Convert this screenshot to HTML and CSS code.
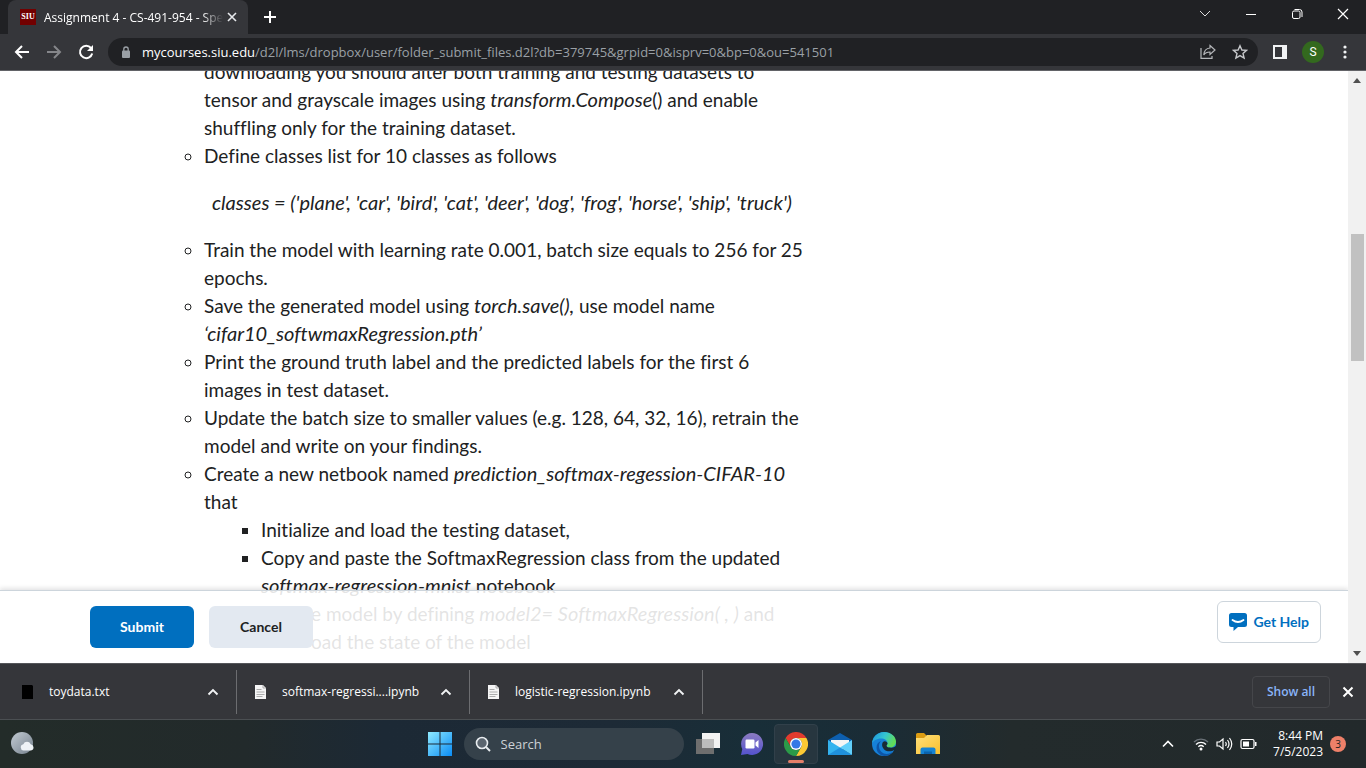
FILE: index.html
```html
<!DOCTYPE html>
<html lang="en">
<head>
<meta charset="utf-8">
<title>Assignment 4 - CS-491-954</title>
<link rel="stylesheet" href="styles.css">
</head>
<body>
<div class="screen">
  <header class="tabstrip">
    <div class="tab">
      <span class="favicon">SIU</span>
      <span class="tab-title">Assignment 4 - CS-491-954 - Spe</span>
      <button class="icon-btn" aria-label="Close tab"><svg width="10" height="10" viewBox="0 0 10 10"><path d="M1 1l8 8M9 1L1 9" stroke="#e8eaed" stroke-width="1.6"/></svg></button>
    </div>
    <button class="icon-btn new-tab" aria-label="New tab"><svg width="14" height="14" viewBox="0 0 14 14"><path d="M7 1v12M1 7h12" stroke="#fff" stroke-width="2"/></svg></button>
    <div class="window-controls">
      <button class="icon-btn" aria-label="Search tabs"><svg width="12" height="12" viewBox="0 0 12 12"><path d="M1 3l5 5 5-5" fill="none" stroke="#ddd"/></svg></button>
      <button class="icon-btn" aria-label="Minimize"><svg width="12" height="12" viewBox="0 0 12 12"><path d="M1 6.500h10" stroke="#fff"/></svg></button>
      <button class="icon-btn" aria-label="Restore"><svg width="12" height="12" viewBox="0 0 12 12" fill="none" stroke="#fff"><rect x="1.500" y="3" width="7.500" height="7.500" rx="1.500"/><path d="M3.500 1.500h5a2.500 2.500 0 0 1 2.500 2.500v5"/></svg></button>
      <button class="icon-btn" aria-label="Close"><svg width="12" height="12" viewBox="0 0 12 12"><path d="M1 1l10 10M11 1L1 11" stroke="#fff" stroke-width="1.200"/></svg></button>
    </div>
  </header>

  <nav class="toolbar" aria-label="Browser toolbar">
    <button class="icon-btn" aria-label="Back"><svg width="16" height="16" viewBox="0 0 16 16" fill="none" stroke="#fff" stroke-width="2"><path d="M15 8H2M8 2L2 8l6 6"/></svg></button>
    <button class="icon-btn" aria-label="Forward"><svg width="16" height="16" viewBox="0 0 16 16" fill="none" stroke="#85868a" stroke-width="2"><path d="M1 8h13M8 2l6 6-6 6"/></svg></button>
    <button class="icon-btn" aria-label="Reload"><svg width="16" height="16" viewBox="0 0 16 16"><path d="M13 4A6.200 6.200 0 1 0 14.200 9.500" fill="none" stroke="#fff" stroke-width="2"/><path d="M15 1v6H9z" fill="#fff"/></svg></button>
    <div class="omnibox">
      <svg width="10" height="13" viewBox="0 0 10 13"><rect x="1" y="4.500" width="8" height="7.500" rx="1" fill="#9aa0a6"/><path d="M2.800 5V3.200a2.200 2.200 0 0 1 4.400 0V5" fill="none" stroke="#9aa0a6" stroke-width="1.300"/></svg>
      <a class="url" href="#"><b>mycourses.siu.edu</b>/d2l/lms/dropbox/user/folder_submit_files.d2l?db=379745&amp;grpid=0&amp;isprv=0&amp;bp=0&amp;ou=541501</a>
      <button class="icon-btn" aria-label="Share"><svg width="16" height="16" viewBox="0 0 16 16" fill="none" stroke="#b5b7ba" stroke-width="1.200"><path d="M1 4v10.400h11V12"/><path d="M10 1.500L15 6l-5 4.500V8C7 8 5 9 3.800 11 4 7.500 6 4.300 10 4z"/></svg></button>
      <button class="icon-btn" aria-label="Bookmark"><svg width="16" height="16" viewBox="0 0 16 16"><path d="M8 1.800l1.900 4.200 4.600.4-3.500 3 1.100 4.600L8 11.600 3.900 14 5 9.400l-3.500-3L6.100 6z" fill="none" stroke="#c6c8cb" stroke-width="1.400"/></svg></button>
    </div>
    <button class="icon-btn side" aria-label="Side panel"><svg width="14" height="14" viewBox="0 0 14 14"><rect x="1" y="1" width="12" height="12" fill="none" stroke="#f1f3f4" stroke-width="2"/><path d="M9 1h4v12H9z" fill="#f1f3f4"/></svg></button>
    <button class="avatar" aria-label="Profile">S</button>
    <button class="icon-btn menu" aria-label="Menu"><svg width="4" height="14" viewBox="0 0 4 14" fill="#f1f3f4"><circle cx="2" cy="2" r="1.600"/><circle cx="2" cy="7" r="1.600"/><circle cx="2" cy="12" r="1.600"/></svg></button>
  </nav>

  <main class="viewport">
    <div class="page">
      <article class="content">
        <ul class="steps">
          <li class="continued">downloading you should alter both training and testing datasets to<br>tensor and grayscale images using <i>transform.Compose</i>() and enable<br>shuffling only for the training dataset.</li>
          <li>Define classes list for 10 classes as follows
            <p class="code"><i>classes = ('plane', 'car', 'bird', 'cat', 'deer', 'dog', 'frog', 'horse', 'ship', 'truck')</i></p></li>
          <li>Train the model with learning rate 0.001, batch size equals to 256 for 25<br>epochs.</li>
          <li>Save the generated model using <i>torch.save(),</i> use model name<br><i>‘cifar10_softwmaxRegression.pth’</i></li>
          <li>Print the ground truth label and the predicted labels for the first 6<br>images in test dataset.</li>
          <li>Update the batch size to smaller values (e.g. 128, 64, 32, 16), retrain the<br>model and write on your findings.</li>
          <li>Create a new netbook named <i>prediction_softmax-regession-CIFAR-10</i><br>that
            <ul class="substeps">
              <li>Initialize and load the testing dataset,</li>
              <li>Copy and paste the SoftmaxRegression class from the updated<br><i>softmax-regression-mnist</i> notebook</li>
              <li class="covered">e model by defining <i>model2= SoftmaxRegression( , )</i> and<br>oad the state of the model</li>
            </ul></li>
        </ul>
      </article>
      <footer class="actions">
        <button class="btn primary">Submit</button>
        <button class="btn">Cancel</button>
        <button class="help"><svg width="18" height="18" viewBox="0 0 18 18"><path d="M2.500 0h13A2.500 2.500 0 0 1 18 2.500v9a2.500 2.500 0 0 1-2.500 2.500H9l-4.500 4v-4h-2A2.500 2.500 0 0 1 0 11.500v-9A2.500 2.500 0 0 1 2.500 0z" fill="#006fbf"/><path d="M3.500 7q5.500 4 11 0" fill="none" stroke="#fff" stroke-width="1.800" stroke-linecap="round"/></svg>Get Help</button>
      </footer>
    </div>
    <div class="scrollbar" aria-hidden="true">
      <svg width="8" height="5" viewBox="0 0 8 5"><path d="M0 5l4-5 4 5z" fill="#505050"/></svg>
      <span class="track"><span class="thumb"></span></span>
      <svg width="8" height="5" viewBox="0 0 8 5"><path d="M0 0l4 5 4-5z" fill="#505050"/></svg>
    </div>
  </main>

  <section class="downloads" aria-label="Downloads">
    <div class="download"><svg width="12" height="14" viewBox="0 0 12 14"><path d="M1 0h10l1 1v13H1z" fill="#000"/></svg><a href="#">toydata.txt</a><button class="icon-btn" aria-label="Options"><svg width="12" height="8" viewBox="0 0 12 8"><path d="M1.500 6.500L6 2l4.500 4.500" fill="none" stroke="#f1f3f4" stroke-width="1.900"/></svg></button></div>
    <div class="download"><svg width="12" height="14" viewBox="0 0 12 14"><path d="M1 0h8l3 3v11H1z" fill="#f5f5f5"/><path d="M9 0v3h3M2.500 4.500h5M2.500 7h8M2.500 9.500h8M2.500 11.500h6" stroke="#999" fill="none" stroke-width=".8"/></svg><a href="#">softmax-regressi....ipynb</a><button class="icon-btn" aria-label="Options"><svg width="12" height="8" viewBox="0 0 12 8"><path d="M1.500 6.500L6 2l4.500 4.500" fill="none" stroke="#f1f3f4" stroke-width="1.900"/></svg></button></div>
    <div class="download"><svg width="12" height="14" viewBox="0 0 12 14"><path d="M1 0h8l3 3v11H1z" fill="#f5f5f5"/><path d="M9 0v3h3M2.500 4.500h5M2.500 7h8M2.500 9.500h8M2.500 11.500h6" stroke="#999" fill="none" stroke-width=".8"/></svg><a href="#">logistic-regression.ipynb</a><button class="icon-btn" aria-label="Options"><svg width="12" height="8" viewBox="0 0 12 8"><path d="M1.500 6.500L6 2l4.500 4.500" fill="none" stroke="#f1f3f4" stroke-width="1.900"/></svg></button></div>
    <button class="show-all">Show all</button>
    <button class="icon-btn" aria-label="Close downloads"><svg width="12" height="12" viewBox="0 0 12 12"><path d="M1.500 1.500l9 9M10.500 1.500l-9 9" stroke="#fff" stroke-width="2"/></svg></button>
  </section>

  <footer class="taskbar">
    <div class="weather"><svg width="24" height="24" viewBox="0 0 24 24"><defs><linearGradient id="moon" x2="1" y2="1"><stop stop-color="#c3cbd3"/><stop offset="1" stop-color="#75818d"/></linearGradient></defs><circle cx="11" cy="11" r="11" fill="url(#moon)"/><path d="M12.500 18.500a3.200 3.200 0 0 1-.2-6.300 4 4 0 0 1 7.400 0 3.200 3.200 0 0 1 .3 6.300z" fill="#eef2f6"/></svg></div>
    <div class="apps">
      <button class="app start" aria-label="Start"><svg width="24" height="24" viewBox="0 0 24 24"><defs><linearGradient id="win" x2="1" y2="1" gradientUnits="userSpaceOnUse" x1="0" y1="0" gradientTransform="scale(24)"><stop stop-color="#8feaff"/><stop offset="1" stop-color="#0a8cf5"/></linearGradient></defs><path d="M0 0h11.500v11.500H0zM12.500 0H24v11.500H12.500zM0 12.500h11.500V24H0zM12.500 12.500H24V24H12.500z" fill="url(#win)"/></svg></button>
      <label class="search"><svg width="16" height="16" viewBox="0 0 16 16"><circle cx="7" cy="7" r="5.500" fill="#5b656f" stroke="#e9edf0" stroke-width="1.600"/><path d="M11 11l4 4" stroke="#e9edf0" stroke-width="2"/></svg><input type="text" placeholder="Search" aria-label="Search"></label>
      <button class="app" aria-label="Task view"><svg width="24" height="24" viewBox="0 0 24 24"><path d="M0 7h18v15H0z" fill="#6e6e6e"/><path d="M6 1h18v15H6z" fill="#f2f2f2"/><path d="M6 7h12v9H6z" fill="#bdbdbd"/></svg></button>
      <button class="app" aria-label="Chat"><svg width="24" height="24" viewBox="0 0 24 24"><defs><linearGradient id="chat" x2="0" y2="1"><stop stop-color="#8b7bc0"/><stop offset="1" stop-color="#5453cf"/></linearGradient></defs><path d="M12 1a11 11 0 1 1-4.500 21L1 23l1.300-6A11 11 0 0 1 12 1z" fill="url(#chat)"/><rect x="5.500" y="7.500" width="9" height="9" rx="1.200" fill="#fff"/><path d="M15.500 10.500l3-2.500v8l-3-2.500z" fill="#fff"/></svg></button>
      <button class="app active" aria-label="Chrome"><svg width="24" height="24" viewBox="0 0 24 24"><path d="M1.600 6A12 12 0 0 1 22.400 6H12a6 6 0 0 0-5.200 9z" fill="#e33b2e"/><path d="M22.400 6A12 12 0 0 1 12 24l5.200-9A6 6 0 0 0 12 6z" fill="#fcc934"/><path d="M12 24A12 12 0 0 1 1.600 6l5.200 9a6 6 0 0 0 10.400 0z" fill="#2b9a48"/><circle cx="12" cy="12" r="6" fill="#fff"/><circle cx="12" cy="12" r="4.600" fill="#3478e5"/></svg></button>
      <button class="app" aria-label="Mail"><svg width="24" height="24" viewBox="0 0 24 24"><path d="M0 8l12-7 12 7v4H0z" fill="#0d5fae"/><path d="M3 8h18v6l-9 4-9-4z" fill="#f5f5f5"/><path d="M0 8l24 15H0z" fill="#34b3ee"/><path d="M24 8v15L12 15.500z" fill="#62d0fb"/><path d="M0 23l12-7.500L24 23z" fill="#1f91dc"/></svg></button>
      <button class="app" aria-label="Edge"><svg width="24" height="24" viewBox="0 0 24 24"><defs><linearGradient id="edge-top" x2="1" y2=".4"><stop stop-color="#1a8fe0"/><stop offset=".55" stop-color="#35c5cf"/><stop offset="1" stop-color="#61dc5a"/></linearGradient></defs><circle cx="12" cy="12" r="12" fill="#1681d8"/><path d="M0 11.500C.5 5 5.500 0 12 0c7 0 12 4.500 12 9.500 0 4-3 6-6 6-2.500 0-3.500-1-3.500-1.800 0-.7 1-1 1-2.700 0-2.500-2.700-4.500-6.500-4.500-4.500 0-8 2.500-9 5z" fill="url(#edge-top)"/><path d="M9 9c-3 3-2.500 8 .5 11 3 2.800 8 2.500 11.500-.5C19 22.500 15.500 24 12 24 7.500 23 4.500 20 4.500 15.500 4.500 12 6.500 10 9 9z" fill="#0d55a8"/><path d="M11 10c-2 2.500-.5 7 3 8.700 3 1.300 6.500.5 8.500-.7l-1.500 2.500 3-1V14c-2 1.500-4 2-6 1.500-2.500 0-3.500-1-3.500-1.800 0-.7 1-1 1-2.200 0-1.200-2.500-3.500-4.500-1.500z" fill="#192b36"/></svg></button>
      <button class="app" aria-label="File Explorer"><svg width="24" height="24" viewBox="0 0 24 24"><defs><linearGradient id="folder" x2="1" y2="1"><stop stop-color="#ffe07b"/><stop offset="1" stop-color="#f9bf2c"/></linearGradient></defs><path d="M0 2.500A1.500 1.500 0 0 1 1.500 1H8l2.500 2.500V9H0z" fill="#dc9c12"/><path d="M0 6h8l3-3h11.500A1.500 1.500 0 0 1 24 4.500V22H0z" fill="url(#folder)"/><path d="M4.500 22v-4.500A2 2 0 0 1 6.500 15.500h11a2 2 0 0 1 2 2V22z" fill="#1583d3"/><path d="M8 22v-2.500h8V22z" fill="#0b63ad"/></svg></button>
    </div>
    <div class="tray">
      <button class="icon-btn" aria-label="Hidden icons"><svg width="12" height="8" viewBox="0 0 12 8"><path d="M1 6.500l5-5 5 5" fill="none" stroke="#fff" stroke-width="1.600"/></svg></button>
      <span class="status">
        <svg width="16" height="14" viewBox="0 0 16 14" fill="none" stroke-width="1.400"><path d="M1 5a10 10 0 0 1 14 0" stroke="#6b7278"/><path d="M3 7.500a7 7 0 0 1 10 0M5.300 9.800a4 4 0 0 1 5.400 0" stroke="#fff"/><circle cx="8" cy="12" r="1.500" fill="#fff"/></svg>
        <svg width="17" height="14" viewBox="0 0 17 14" fill="none" stroke="#fff" stroke-width="1.200"><path d="M1 5h2.500L7 2v10L3.500 9H1zM9.500 5q1.500 2 0 4M11.500 3q3 4 0 8M13.500 1q4.500 6 0 12"/></svg>
        <svg width="17" height="12" viewBox="0 0 17 12"><rect x="1" y="1.500" width="13" height="9" rx="1.500" fill="none" stroke="#fff" stroke-width="1.200"/><path d="M3 3.500h6v5H3zM15 4h1.500v4H15z" fill="#fff"/></svg>
      </span>
      <time class="clock">8:44 PM<br>7/5/2023</time>
      <span class="badge">3</span>
    </div>
  </footer>
</div>
</body>
</html>
```

FILE: styles.css
```css
* { box-sizing: border-box; }
body { margin: 0; font-family: "Open Sans", "Noto Sans", sans-serif; }
button { font: inherit; border: 0; padding: 0; background: none; cursor: pointer; }
svg { display: block; flex: none; }
a { color: inherit; text-decoration: none; }
.screen { height: 100vh; display: flex; flex-direction: column; overflow: hidden; }
.icon-btn { display: flex; align-items: center; justify-content: center; flex: none; }

.tabstrip { flex: none; height: 34px; display: flex; background: #202124; padding-left: 8px; color: #fff; }
.tab { width: 240px; display: flex; align-items: center; padding: 0 11px 0 12px; background: #35363a; border-radius: 8px 8px 0 0; font-size: 12px; }
.favicon { width: 16px; height: 16px; flex: none; background: #720000; font: bold 8px/16px "Liberation Serif", serif; text-align: center; margin-right: 8px; }
.tab-title { flex: 1; overflow: hidden; white-space: nowrap; margin-right: 4px; -webkit-mask-image: linear-gradient(90deg, #000 88%, transparent); mask-image: linear-gradient(90deg, #000 88%, transparent); }
.new-tab { width: 44px; }
.window-controls { margin-left: auto; display: flex; padding-bottom: 6px; }
.window-controls .icon-btn { width: 46px; }

.toolbar { flex: none; height: 37px; display: flex; align-items: center; background: #35363a; padding: 0 12px 0 6px; border-bottom: 1px solid #626367; }
.toolbar > .icon-btn { width: 32px; height: 28px; }
.omnibox { flex: 1; min-width: 0; height: 28px; margin-left: 6px; padding: 0 10px 0 13px; display: flex; align-items: center; gap: 16px; background: #202124; border-radius: 14px; color: #9aa0a6; font-size: 13px; }
.url { flex: 1; min-width: 0; overflow: hidden; white-space: nowrap; margin-left: -5px; }
.url b { font-weight: 400; color: #fff; }
.toolbar > .side { width: 44px; }
.avatar { width: 22px; height: 22px; border-radius: 50%; background: #33691e; color: #fff; font: 12px/22px Roboto, sans-serif; }
.toolbar > .menu { width: 20px; margin-left: 11px; margin-right: -1px; }

.viewport { flex: 1; min-height: 0; display: flex; background: #fff; }
.page { flex: 1; min-width: 0; position: relative; overflow: hidden; }
.content { padding-left: 164px; margin-top: -13px; font: 19px/28px Lato, sans-serif; font-variant-ligatures: none; color: #202122; white-space: nowrap; }
.content i { font-size: 20px; line-height: 20px; }
.steps { margin: 0; padding-left: 40px; list-style: circle; }
.continued { list-style: none; }
.code { margin: 19px 0 19px 8px; }
.substeps { margin: 0; padding-left: 57px; list-style: square; }
.covered { padding-left: 50px; list-style: none; }
.actions { position: absolute; left: 0; right: 0; bottom: 0; height: 73px; display: flex; align-items: flex-start; gap: 15px; padding: 15px 27px 0 90px; background: rgba(255, 255, 255, .88); border-top: 1px solid #cdd5dc; box-shadow: 0 -2px 4px rgba(73, 76, 78, .15); }
.btn { min-width: 104px; height: 42px; padding: 0 29px; border-radius: 6px; background: #e3e9f1; color: #202122; font: bold 14px/40px Lato, sans-serif; }
.primary { background: #006fbf; color: #fff; }
.help { display: flex; align-items: center; gap: 6px; height: 42px; margin: -5px 0 0 auto; padding: 0 11px; border: 1px solid #cdd5dc; border-radius: 6px; background: #fff; color: #006fbf; font: bold 14px/20px Lato, sans-serif; }
.scrollbar { width: 18px; display: flex; flex-direction: column; align-items: center; padding: 7px 0; background: #f1f1f1; }
.track { flex: 1; width: 100%; padding: 151px 2px 0 3px; }
.thumb { display: block; height: 127px; background: #c1c1c1; }

.downloads { flex: none; height: 57px; display: flex; align-items: center; background: #35363a; border-top: 1px solid #55565a; border-bottom: 1px solid #4b4f52; color: #fff; font-size: 12px; padding-right: 12px; }
.download { width: 233px; height: 44px; display: flex; align-items: center; padding: 0 17px; border-right: 1px solid #6c6d70; }
.download:first-child { width: 237px; padding-left: 21px; }
.download a { flex: 1; margin-left: 16px; white-space: nowrap; }
.show-all { margin: 0 12px 0 auto; width: 78px; height: 32px; border: 1px solid #45464a; border-radius: 4px; color: #8ab4f8; font-weight: 600; }

.taskbar { flex: none; height: 48px; display: flex; align-items: center; justify-content: space-between; padding: 0 20px 0 11px; background: linear-gradient(90deg, #232c29 0, #222a2b 18%, #1c2935 28%, #1d2a36 45%, #182e38 55%, #1a2c36 64%, #232b2c 74%, #22292b 100%); color: #fff; }
.weather, .tray { flex: 1; }
.apps { display: flex; align-items: center; padding-left: 8px; }
.app { width: 44px; height: 40px; display: flex; align-items: center; justify-content: center; border-radius: 4px; position: relative; }
.start { width: 48px; }
.search { width: 220px; height: 32px; display: flex; align-items: center; gap: 10px; padding: 0 11px; margin-right: 2px; border-radius: 16px; background: #35414a; }
.search input { flex: 1; min-width: 0; border: 0; padding: 0; background: none; color: #fff; font: 13px/20px "Open Sans", sans-serif; }
.search input::placeholder { color: #cdd1d5; opacity: 1; }
.active { background: #27363f; border: 1px solid #31404a; }
.active::after { content: ""; position: absolute; left: 50%; bottom: 0; width: 16px; height: 3px; margin-left: -8px; border-radius: 2px; background: #e57f6a; }
.tray { display: flex; align-items: center; justify-content: flex-end; }
.status { display: flex; align-items: center; gap: 7px; margin: 0 16px 0 19px; }
.clock { font-size: 12px; line-height: 16px; text-align: right; }
.badge { width: 16px; height: 16px; margin-left: 7px; border-radius: 50%; background: #ee8069; color: #222; font-size: 10px; line-height: 16px; text-align: center; }
```
